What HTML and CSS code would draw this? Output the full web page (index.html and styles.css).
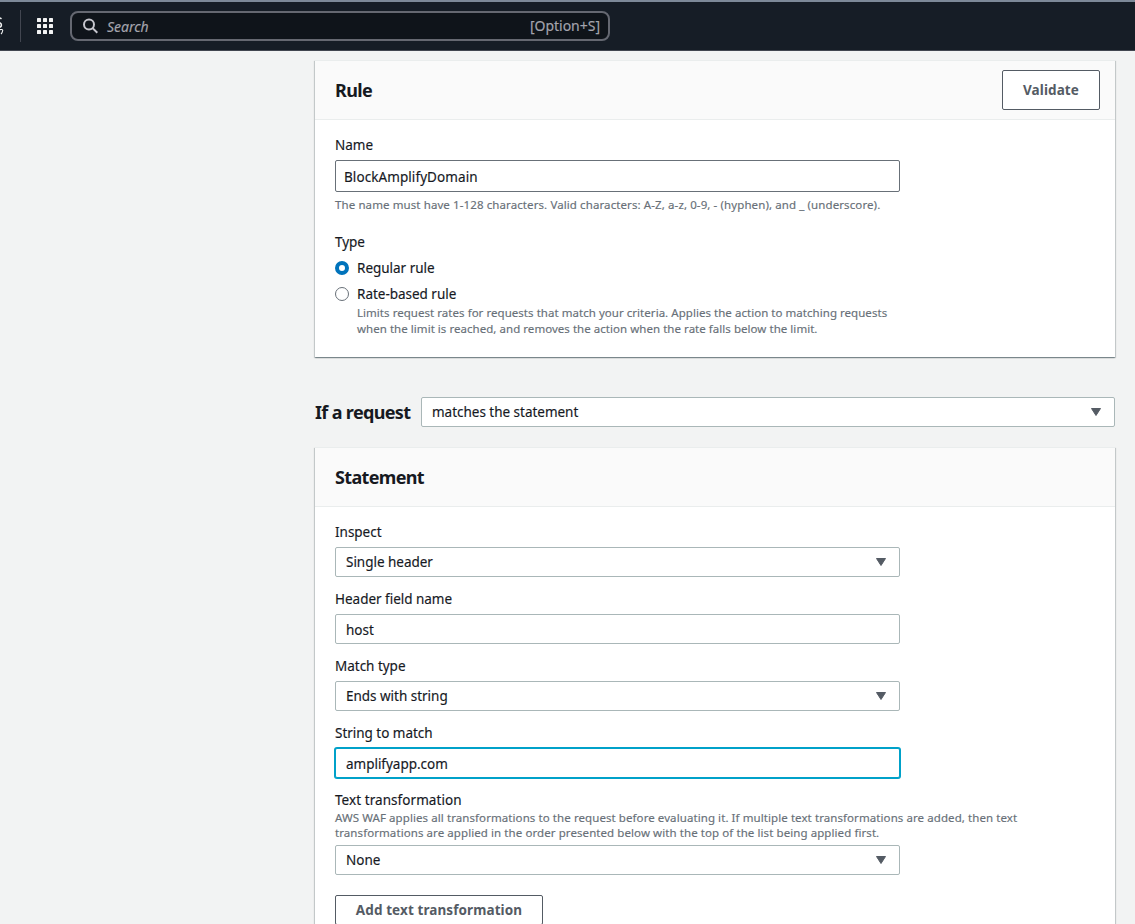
FILE: index.html
```html
<!DOCTYPE html>
<html lang="en">
<head>
    <meta charset="UTF-8">
    <meta name="viewport" content="width=device-width, initial-scale=1.0">
    <title>Rule builder - AWS WAF</title>
    <link rel="stylesheet" href="styles.css">
</head>
<body>
    <header class="topbar">
        <div class="logo">
            <svg width="4" height="24" viewBox="0 0 4 24" fill="none" stroke="#f2f3f3">
                <path d="M1.500 4.800L0 3.800M-1 8.500C2.200 9 2.200 13 -1 13.500" stroke-width="1.600"/>
                <path d="M-1 16C1 15.200 3 15.400 2.700 16.500C2.500 18 1.800 19.200 1 20" stroke-width="1.100"/>
            </svg>
        </div>
        <div class="apps">
            <svg width="16" height="16" viewBox="0 0 16 16" fill="#f2f3f3">
                <rect x="0" y="0" width="4" height="4" rx=".6"/><rect x="6" y="0" width="4" height="4" rx=".6"/><rect x="12" y="0" width="4" height="4" rx=".6"/>
                <rect x="0" y="6" width="4" height="4" rx=".6"/><rect x="6" y="6" width="4" height="4" rx=".6"/><rect x="12" y="6" width="4" height="4" rx=".6"/>
                <rect x="0" y="12" width="4" height="4" rx=".6"/><rect x="6" y="12" width="4" height="4" rx=".6"/><rect x="12" y="12" width="4" height="4" rx=".6"/>
            </svg>
        </div>
        <div class="search">
            <svg width="16" height="16" viewBox="0 0 16 16" fill="none" stroke="#c6c6cd" stroke-width="2">
                <circle cx="6" cy="6.500" r="5"/>
                <path d="M9.600 10.100L14.300 14.800"/>
            </svg>
            <span class="search-text">Search</span>
            <span class="search-key">[Option+S]</span>
        </div>
    </header>

    <main class="content">
        <section class="panel">
            <div class="panel-header">
                <h2>Rule</h2>
                <button class="btn btn-validate">Validate</button>
            </div>
            <div class="panel-body">
                <label class="label">Name</label>
                <div class="field field-name"><span>BlockAmplifyDomain</span></div>
                <p class="hint name-hint">The name must have 1-128 characters. Valid characters: A-Z, a-z, 0-9, - (hyphen), and _ (underscore).</p>

                <div class="label type-label">Type</div>
                <div class="radio-row">
                    <span class="radio checked"></span>
                    <span>Regular rule</span>
                </div>
                <div class="radio-row">
                    <span class="radio"></span>
                    <span>Rate-based rule</span>
                </div>
                <p class="hint radio-hint">Limits request rates for requests that match your criteria. Applies the action to matching requests<br>when the limit is reached, and removes the action when the rate falls below the limit.</p>
            </div>
        </section>

        <div class="request-row">
            <h2>If a request</h2>
            <div class="field select">
                <span>matches the statement</span>
                <svg class="caret" width="10" height="8" viewBox="0 0 10 8"><path d="M0.500 0.500H9.500L5 7.500Z"/></svg>
            </div>
        </div>

        <section class="panel">
            <div class="panel-header">
                <h2>Statement</h2>
            </div>
            <div class="panel-body statement">
                <div class="form-group">
                    <label class="label">Inspect</label>
                    <div class="field select">
                        <span>Single header</span>
                        <svg class="caret" width="10" height="8" viewBox="0 0 10 8"><path d="M0.500 0.500H9.500L5 7.500Z"/></svg>
                    </div>
                </div>
                <div class="form-group">
                    <label class="label">Header field name</label>
                    <div class="field text"><span>host</span></div>
                </div>
                <div class="form-group">
                    <label class="label">Match type</label>
                    <div class="field select">
                        <span>Ends with string</span>
                        <svg class="caret" width="10" height="8" viewBox="0 0 10 8"><path d="M0.500 0.500H9.500L5 7.500Z"/></svg>
                    </div>
                </div>
                <div class="form-group">
                    <label class="label">String to match</label>
                    <div class="field text focused"><span>amplifyapp.com</span></div>
                </div>
                <div class="form-group">
                    <label class="label label-wide">Text transformation</label>
                    <p class="hint transform-hint">AWS WAF applies all transformations to the request before evaluating it. If multiple text transformations are added, then text<br>transformations are applied in the order presented below with the top of the list being applied first.</p>
                    <div class="field select">
                        <span>None</span>
                        <svg class="caret" width="10" height="8" viewBox="0 0 10 8"><path d="M0.500 0.500H9.500L5 7.500Z"/></svg>
                    </div>
                </div>
                <button class="btn btn-add">Add text transformation</button>
            </div>
        </section>
    </main>
</body>
</html>
```
FILE: styles.css
```css
* {
    margin: 0;
    padding: 0;
    box-sizing: border-box;
}

body {
    font-family: 'Noto Sans', 'Open Sans', sans-serif;
    font-size: 13.5px;
    line-height: 22px;
    letter-spacing: -0.02px;
    color: #16191f;
    background: #f2f3f3;
    height: 924px;
    overflow: hidden;
    -webkit-text-stroke-width: 0.15px;
}

/* Top navigation */
.topbar {
    display: flex;
    align-items: center;
    height: 51px;
    background: #161d26;
    border-top: 2px solid #7d8998;
    border-bottom: 1px solid #424650;
}

.logo {
    display: flex;
    align-items: center;
    width: 21px;
    height: 32px;
    border-right: 1px solid #424650;
}

.apps {
    display: flex;
    width: 49px;
    padding-left: 16px;
}

.search {
    display: flex;
    align-items: center;
    width: 540px;
    height: 30px;
    padding: 0 8px 0 11px;
    background: #0f141a;
    border: 2px solid #656871;
    border-radius: 8px;
    color: #a4a4ad;
    font-size: 14px;
}

.search-text {
    flex: 1;
    margin-left: 8px;
    padding-top: 1px;
    font-style: italic;
}

/* Panels */
.content {
    width: 800px;
    margin: 9px 0 0 315px;
}

.panel {
    background: #fff;
    border-top: 1px solid #eaeded;
    box-shadow: 0 1px 1px 0 rgba(0,28,36,0.3), 1px 1px 1px 0 rgba(0,28,36,0.15), -1px 1px 1px 0 rgba(0,28,36,0.15);
}

.panel-header {
    display: flex;
    justify-content: space-between;
    align-items: center;
    height: 59px;
    padding: 0 15px 0 20px;
    background: #fafafa;
    border-bottom: 1px solid #eaeded;
}

h2 {
    font-size: 18px;
    font-weight: 700;
    line-height: 22px;
    letter-spacing: -0.65px;
    -webkit-text-stroke-width: 0;
}

.panel-body {
    padding: 14px 20px 20px;
}

/* Form fields */
.label {
    display: block;
    margin-bottom: 4px;
}

.label-wide {
    letter-spacing: 0.06px;
}

.field {
    display: flex;
    align-items: center;
    width: 565px;
    height: 30px;
    padding: 0 13px 0 10px;
    background: #fff;
    border: 1px solid #aab7b8;
    border-radius: 2px;
}

.field-name {
    height: 32px;
    padding: 2px 8px 0;
    border-color: #687078;
    letter-spacing: 0.08px;
}

.field.text {
    padding-top: 2px;
}

.field.select {
    justify-content: space-between;
}

.field.focused {
    border-color: #00a1c9;
    box-shadow: 0 0 0 1px #00a1c9;
}

.caret {
    fill: #545b64;
    stroke: #545b64;
    stroke-linejoin: round;
}

.hint {
    font-size: 11.5px;
    line-height: 16px;
    letter-spacing: 0.08px;
    color: #687078;
    white-space: nowrap;
}

.name-hint {
    margin-top: 5px;
    letter-spacing: 0.1px;
}

.type-label {
    margin-top: 18px;
}

.radio-row {
    display: flex;
    align-items: center;
    gap: 8px;
    margin-bottom: 4px;
}

.radio {
    width: 14px;
    height: 14px;
    background: #fff;
    border: 1px solid #687078;
    border-radius: 50%;
}

.radio.checked {
    border: 4px solid #0073bb;
}

.radio-hint {
    margin: -4px 0 0 22px;
    letter-spacing: 0.04px;
}

.request-row {
    display: flex;
    align-items: center;
    justify-content: space-between;
    margin: 40px 0 20px;
}

.request-row .field {
    width: 694px;
}

.statement {
    display: flex;
    flex-direction: column;
    gap: 11px;
}

.transform-hint {
    margin: -5px 0 5px;
    line-height: 15px;
}

/* Buttons */
.btn {
    font-family: inherit;
    font-size: 13.5px;
    font-weight: 700;
    letter-spacing: 0.1px;
    color: #545b64;
    background: #fff;
    border: 1px solid #545b64;
    border-radius: 2px;
    -webkit-text-stroke-width: 0;
}

.btn-validate {
    width: 98px;
    height: 40px;
}

.btn-add {
    width: 208px;
    height: 30px;
    margin-top: 9px;
}
```
